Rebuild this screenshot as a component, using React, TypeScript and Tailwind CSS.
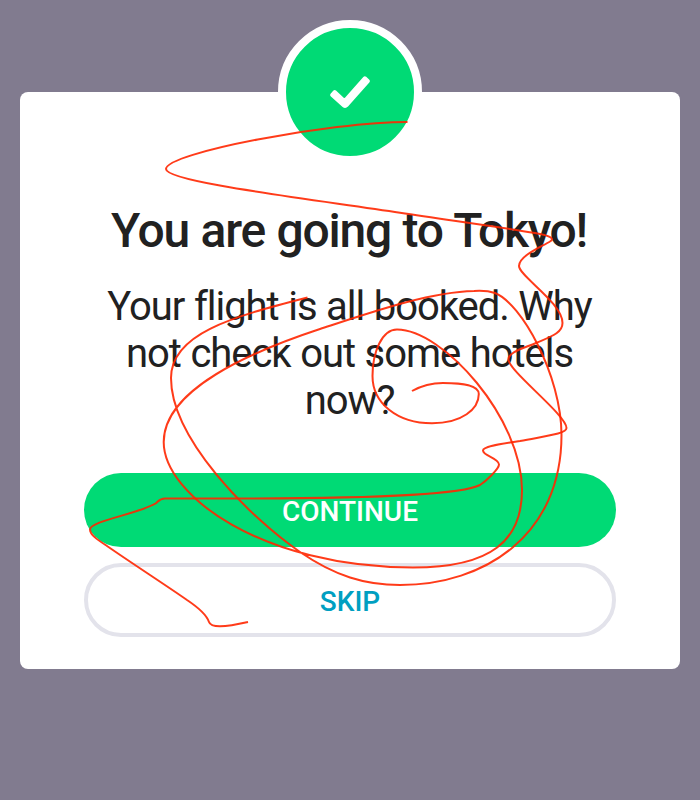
function Scribble() {
  return (
    <svg className="pointer-events-none absolute inset-0" width="700" height="800" viewBox="0 0 700 800" fill="none" stroke="#ff2600" strokeOpacity="0.9" strokeWidth="2" strokeLinejoin="round">
      <path
        d="M407.5 122 C330 122 166 153 166 169 C166 182 310 199 400 212.7 C450 220.3 500 227 535 233
           C548 235.3 556 238 550 241.5 C541 247 519 256 519 266 C519 276 562.5 303 562.5 323
           C562.5 333 551 336.5 536 343 C523 348.5 508.5 352 508.5 359.5 C508.5 371 566.5 415 566.5 428
           C566.5 434 545 436 520 441 C505 443.5 483 446 483 450.5 C483 456 499 458 499 464.5
           C499 469 486 481 480 485 C463 494 390 498.5 240 498.5 L165 498.5
           C160 498.5 159 500.5 155.5 503.5 C138 514 90 521 90 529.5 C90 535 98 540 107 546
           C133 564 167 586 187 600 C199 608 207 616 209 622 C211 628 224 627.5 248 622"
      />
      <path
        d="M307.5 297.5 C231 317 171 334 171 378 C171 438 248 516 300 552 C335 576 365 585 400 585
           C485 585 561.5 535 561.5 435 C561.5 375 521 303 495 293 C489 291 482 290.5 474 291 C430 292 375 311 320 329
           C250 352 163.7 390 163.7 442 C163.7 495 262 567.5 413 567.5 C492 567.5 522 540 522 490
           C522 418 443 329.5 397 329.5 C382 329.5 372.5 352 372.5 376 C372.5 403 397 423.3 432 423.3
           C462 423.3 478.8 409 478.8 394 C478.8 385 463 383 443 383 C431 383 421 386 412 391"
      />
    </svg>
  );
}

export default function App() {
  return (
    <main className="relative h-[800px] w-[700px] overflow-hidden bg-[#817b8f] px-5 pt-[92px] font-['Roboto',sans-serif] text-[#212121]">
      <section className="flex h-[577px] flex-col items-center rounded-lg bg-white px-16 text-center">
        <div className="-mt-[72px] flex size-36 shrink-0 items-center justify-center rounded-full border-8 border-white bg-[#00da75]">
          <svg width="40" height="32" viewBox="0 0 40 32">
            <path d="M6 14.6 Q4.6 13.4 3.2 14.8 L.8 17.6 Q-.6 19.2 .9 20.6 L12.6 31 Q15.4 33 18 30.6 L39.3 6.4 Q40.6 4.8 39.1 3.4 L36.2.8 Q34.7-.5 33.3 1 L15.2 21.6 Q14.5 22.4 13.7 21.7Z" fill="white" />
          </svg>
        </div>
        <h1 className="mt-[39px] pr-0.5 text-[48px] font-medium leading-[56px] tracking-[-1.26px] [word-spacing:1px]">You are going to Tokyo!</h1>
        <p className="mt-6 w-[500px] pr-px text-[40px] leading-[47px] tracking-[-1.04px] [word-spacing:0.7px]">Your flight is all booked. Why not check out some hotels now?</p>
        <div className="mt-[49px] flex w-[532px] flex-col gap-4 text-[28px] font-medium">
          <button className="h-[74px] rounded-full bg-[#00da75] pt-1 text-white">CONTINUE</button>
          <button className="h-[74px] rounded-full border-4 border-[#e3e3eb] pt-1 text-[#009fc1]">SKIP</button>
        </div>
      </section>
      <Scribble />
    </main>
  );
}
